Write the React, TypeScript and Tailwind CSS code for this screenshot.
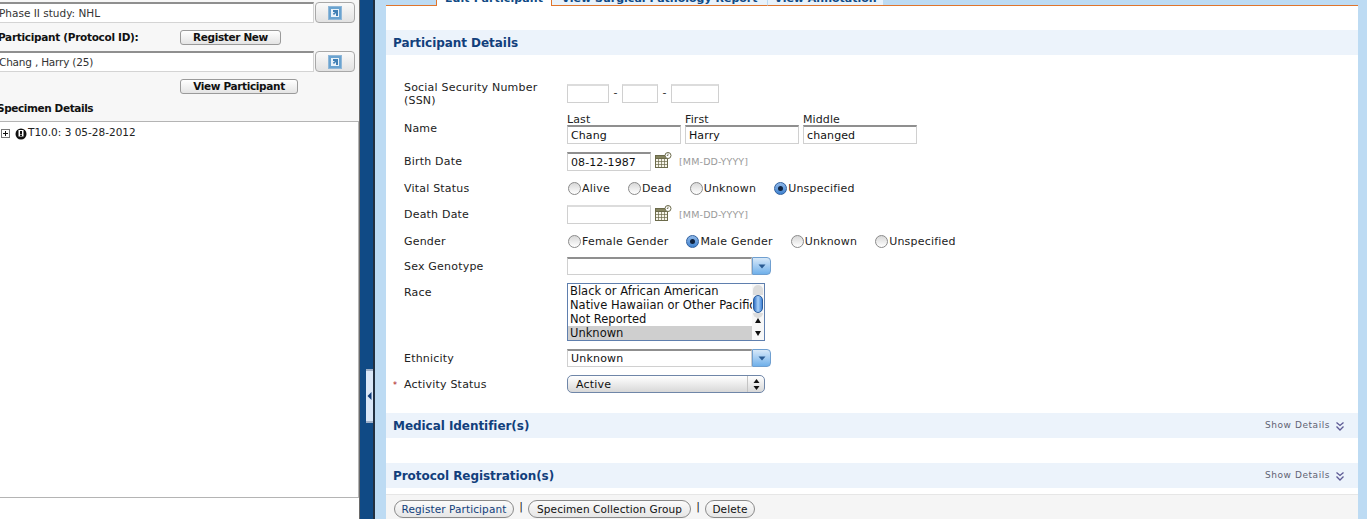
import React from 'react';

const Radio = ({ on }: { on?: boolean }) => (
  <span className={`inline-flex items-center justify-center w-[13px] h-[13px] rounded-full border shrink-0 ${on ? 'border-[#2f5f9e] bg-gradient-to-b from-[#8fb8e8] to-[#3f83d0]' : 'border-[#8a8a8a] bg-gradient-to-b from-[#d8d8d8] to-[#ffffff]'}`}>
    {on && <span className="w-[5px] h-[5px] rounded-full bg-[#10233f]" />}
  </span>
);

const RadioItem = ({ label, on }: { label: string; on?: boolean }) => (
  <span className="flex items-center gap-px">
    <Radio on={on} />
    <span className="pt-px">{label}</span>
  </span>
);

const Calendar = () => (
  <svg width="17" height="17" viewBox="0 0 17 17" className="shrink-0 mb-[3px]">
    <rect x="0.5" y="3.5" width="12" height="12" fill="#f7f5ea" stroke="#6b6a4a" />
    <rect x="0.5" y="3.5" width="12" height="3" fill="#85845f" stroke="#6b6a4a" />
    <path d="M3.5 7v8M6.5 7v8M9.5 7v8M1 9.5h11M1 12.5h11" stroke="#6b6a4a" strokeWidth="0.7" />
    <circle cx="13" cy="3.5" r="3" fill="#fff" stroke="#6b6a4a" />
    <path d="M13 1.5v2h-1.2" fill="none" stroke="#6b6a4a" strokeWidth="0.8" />
  </svg>
);

const DateHint = () => (
  <span className="ml-[7px] pt-px text-[9.5px] text-[#9a9a9a] tracking-[0.15px]">[MM-DD-YYYY]</span>
);

const TextBox = ({ w, value, light }: { w: string; value?: string; light?: boolean }) => (
  <div className={`${w} h-[19px] bg-white border border-[#d0d0d0] border-t-2 ${light ? 'border-t-[#dcdcdc]' : 'border-t-[#8f8f8f]'} px-[3px] leading-[17px] text-[11px] text-[#111] tracking-[0.1px]`}>
    {value}
  </div>
);

const ComboBox = ({ value }: { value?: string }) => (
  <div className="w-[204px] h-[18px] flex">
    <div className="flex-1 bg-white border border-[#d0d0d0] border-t-2 border-t-[#8f8f8f] px-[3px] leading-[15px] tracking-[0.2px]">{value}</div>
    <div className="w-[19px] flex items-center justify-center rounded-r-[4px] border border-[#6f9fd0] bg-gradient-to-b from-[#d7e8f8] to-[#6fb0ea]">
      <svg width="8" height="5" viewBox="0 0 8 5"><path d="M0.5 0.5h7L4 4.5z" fill="#2a5a92" /></svg>
    </div>
  </div>
);

const SectionBar = ({ title, details }: { title: string; details?: boolean }) => (
  <div className="h-[25px] bg-[#ecf3fb] flex items-center justify-between pl-[7px] pr-[14px]">
    <span className="pt-px font-bold text-[12px] tracking-[-0.05px] text-[#123f7c]">{title}</span>
    {details && (
      <span className="flex items-center gap-[6px] pt-px text-[9px] tracking-[0.55px] text-[#5f6272]">
        Show Details
        <svg width="8" height="9" viewBox="0 0 8 9" fill="none" stroke="#5d5a94" strokeWidth="1.3">
          <path d="M0.5 0.5L4 3.5L7.5 0.5M0.5 4.5L4 8L7.5 4.5" />
        </svg>
      </span>
    )}
  </div>
);

const LookupBtn = () => (
  <div className="w-[40px] h-[21px] rounded-[4px] border border-[#a8a8a8] bg-gradient-to-b from-[#fafafa] to-[#e2e2e2] flex items-center justify-center">
    <svg width="14" height="14" viewBox="0 0 14 14">
      <rect x="0.5" y="0.5" width="13" height="13" fill="#6aa3d0" stroke="#8fb7d8" />
      <rect x="3" y="3" width="8" height="8" fill="#eaf3fa" />
      <path d="M5 4h5v6H8V7L6 9 4.8 7.8 7 6H5z" fill="#3f7fb5" />
    </svg>
  </div>
);

const SmallBtn = ({ label, w }: { label: string; w: string }) => (
  <div className={`${w} h-[15px] pt-px rounded-[3px] border border-[#9a9a9a] bg-gradient-to-b from-[#ffffff] to-[#e4e4e4] flex items-center justify-center font-bold text-[10.5px] text-[#111] tracking-[-0.35px]`}>
    {label}
  </div>
);

const PillBtn = ({ label, w, blue }: { label: string; w: string; blue?: boolean }) => (
  <div className={`${w} h-[18px] pt-px rounded-full border border-[#8a8a8a] bg-gradient-to-b from-[#fbfbfb] to-[#e6e6e6] flex items-center justify-center text-[10.5px] tracking-[0.1px] ${blue ? 'text-[#123f7c]' : 'text-[#111]'}`}>
    {label}
  </div>
);

const Row = ({ label, h, mt, req, top, children }: { label: React.ReactNode; h: string; mt: string; req?: boolean; top?: boolean; children: React.ReactNode }) => (
  <div className={`flex ${h} ${mt} ${top ? 'items-start' : 'items-center'}`}>
    <div className={`w-[163px] shrink-0 flex leading-[13px] tracking-[0.2px] text-[#222] ${top ? 'pt-[3px]' : ''} ${req ? 'pt-px' : ''}`}>
      {req && <span className="w-[11px] -ml-[11px] pt-px text-[#a11] text-[8px]">*</span>}
      <div className="w-[140px]">{label}</div>
    </div>
    {children}
  </div>
);

const Tab = ({ label, w, sep }: { label: string; w: string; sep?: boolean }) => (
  <div className={`${w} h-[20px] shrink-0 flex items-end justify-center whitespace-nowrap leading-[13px] bg-[#e8f2fb] border-b border-[#e0752c] ${sep ? 'border-r border-r-[#bddbf3]' : ''}`}>
    {label}
  </div>
);

export default function App() {
  return (
    <div className="w-[1367px] h-[519px] overflow-hidden flex bg-white text-[11px] text-[#111]" style={{ fontFamily: '"DejaVu Sans", Verdana, sans-serif' }}>
      {/* left tree panel */}
      <div className="w-[359px] shrink-0 flex flex-col bg-[#f7f7f7]">
        <div className="flex gap-px pt-[2px]">
          <div className="w-[316px] h-[21px] bg-white border border-[#d4d4d4] border-t-2 border-t-[#8f8f8f] -ml-[2px] leading-[19px] text-[10.5px] text-[#333]">Phase II study: NHL</div>
          <LookupBtn />
        </div>
        <div className="flex items-center h-[15px] mt-[7px]">
          <span className="w-[182px] -ml-[2px] pt-px font-bold text-[10.5px] tracking-[-0.3px]">Participant (Protocol ID):</span>
          <SmallBtn label="Register New" w="w-[101px]" />
        </div>
        <div className="flex gap-px mt-[6px]">
          <div className="w-[316px] h-[21px] bg-white border border-[#d4d4d4] border-t-2 border-t-[#8f8f8f] -ml-[2px] leading-[18px] text-[10.5px] tracking-[-0.2px] text-[#333]">Chang , Harry (25)</div>
          <LookupBtn />
        </div>
        <div className="pl-[180px] mt-[7px]">
          <SmallBtn label="View Participant" w="w-[118px]" />
        </div>
        <div className="font-bold mt-[7px] leading-[13px] text-[10.5px] tracking-[-0.4px] -ml-[3px] pt-[1px]">Specimen Details</div>
        <div className="mt-[6px] h-[377px] w-[359px] bg-white border-t border-b border-r border-[#b4b4b4] pt-[4px] flex items-start text-[#222]">
          <svg width="9" height="9" viewBox="0 0 9 9" className="ml-px mt-[3px] shrink-0">
            <rect x="0.5" y="0.5" width="8" height="8" fill="#fff" stroke="#777" />
            <path d="M2 4.5h5M4.5 2v5" stroke="#111" />
          </svg>
          <svg width="12" height="12" viewBox="0 0 12 12" className="ml-[5px] mt-[2px] shrink-0">
            <circle cx="6" cy="6" r="5.5" fill="#111" />
            <rect x="3.5" y="2" width="5" height="6.5" fill="#fff" />
            <rect x="5" y="3" width="2" height="3.5" fill="#111" />
            <rect x="5" y="7" width="2" height="1" fill="#111" />
          </svg>
          <span className="ml-[1px] leading-[13px] text-[10.5px]">T10.0: 3 05-28-2012</span>
        </div>
        <div className="flex-1 bg-white" />
      </div>

      {/* splitter */}
      <div className="relative w-[16px] shrink-0 flex border-l border-[#6a6a6a]">
        <div className="w-[13px] bg-[#104a85]" />
        <div className="w-[2px] bg-[#223040]" />
        <div className="absolute left-[6px] top-[369px] w-[7px] h-[54px] bg-[#dbe8f8] border-y-2 border-[#9fb0c8] flex items-center justify-center">
          <svg width="5" height="8" viewBox="0 0 5 8"><path d="M4.5 0L0.5 4L4.5 8z" fill="#123f7c" /></svg>
        </div>
      </div>

      {/* main panel */}
      <div className="w-[992px] bg-[#bddbf3] pl-[11px] pr-[9px] flex flex-col">
        <div className="w-[972px] flex-1 flex flex-col bg-white">
          <div className="h-[6px] flex items-end overflow-hidden bg-[#bddbf3] font-bold text-[#104a85]">
            <div className="w-[50px] h-[6px] shrink-0 border-b border-[#e0752c]" />
            <div className="w-[116px] h-[21px] shrink-0 flex items-end justify-center whitespace-nowrap leading-[14px] bg-white border-x border-[#e0752c] tracking-[0.1px]">Edit Participant</div>
            <Tab label="View Surgical Pathology Report" w="w-[216px]" sep />
            <Tab label="View Annotation" w="w-[115px]" />
            <div className="flex-1 h-[6px] border-b border-[#e0752c]" />
          </div>
          <div className="mt-[24px]"><SectionBar title="Participant Details" /></div>
          <div className="pl-[18px] pt-[29px]">
            <Row label="Social Security Number (SSN)" h="h-[19px]" mt="mt-0">
              <div className="flex items-center text-[#333]">
                <TextBox w="w-[42px]" light />
                <span className="w-[13px] text-center">-</span>
                <TextBox w="w-[36px]" light />
                <span className="w-[13px] text-center">-</span>
                <TextBox w="w-[48px]" light />
              </div>
            </Row>
            <Row label="Name" h="h-[31px]" mt="mt-[10px]">
              <div className="flex gap-1">
                {[['Last', 'Chang'], ['First', 'Harry'], ['Middle', 'changed']].map(([k, v]) => (
                  <div key={k} className="w-[114px]">
                    <div className="h-[12px] leading-[14px] tracking-[0.1px] text-[#222]">{k}</div>
                    <TextBox w="w-[114px]" value={v} />
                  </div>
                ))}
              </div>
            </Row>
            <Row label="Birth Date" h="h-[19px]" mt="mt-[8px]">
              <TextBox w="w-[84px]" value="08-12-1987" />
              <span className="ml-[4px]"><Calendar /></span>
              <DateHint />
            </Row>
            <Row label="Vital Status" h="h-[19px]" mt="mt-[8px]">
              <div className="flex gap-[18px] pl-px tracking-[0.2px] text-[#222]">
                <RadioItem label="Alive" />
                <RadioItem label="Dead" />
                <RadioItem label="Unknown" />
                <RadioItem label="Unspecified" on />
              </div>
            </Row>
            <Row label="Death Date" h="h-[19px]" mt="mt-[7px]">
              <TextBox w="w-[84px]" light />
              <span className="ml-[4px]"><Calendar /></span>
              <DateHint />
            </Row>
            <Row label="Gender" h="h-[19px]" mt="mt-[8px]">
              <div className="flex gap-[18px] pl-px tracking-[0.2px] text-[#222]">
                <RadioItem label="Female Gender" />
                <RadioItem label="Male Gender" on />
                <RadioItem label="Unknown" />
                <RadioItem label="Unspecified" />
              </div>
            </Row>
            <Row label="Sex Genotype" h="h-[18px]" mt="mt-[6px]">
              <ComboBox />
            </Row>
            <Row label="Race" h="h-[58px]" mt="mt-[8px]" top>
              <div className="w-[198px] h-[58px] flex border border-[#5f7fae] bg-white overflow-hidden leading-[14px] text-[11.5px] text-[#111] whitespace-nowrap">
                <div className="w-[184px] overflow-hidden">
                  <div className="pl-[2px]">Black or African American</div>
                  <div className="pl-[2px]">Native Hawaiian or Other Pacific Islander</div>
                  <div className="pl-[2px]">Not Reported</div>
                  <div className="pl-[2px] h-[15px] bg-[#cfcfcf]">Unknown</div>
                </div>
                <div className="w-[12px] flex flex-col items-center bg-[#f8f8f8] pt-px">
                  <div className="w-[10px] h-[10px] rounded-t-full bg-[#dcdcdc]" />
                  <div className="w-[10px] h-[18px] rounded-full bg-gradient-to-r from-[#2f6fc4] via-[#a8d0f8] to-[#3f82d6] border border-[#2b5c9c]" />
                  <div className="w-[10px] h-[5px] rounded-b-full bg-[#dcdcdc]" />
                  <svg width="6" height="5" viewBox="0 0 6 5"><path d="M3 0L6 5H0z" fill="#111" /></svg>
                  <svg width="6" height="5" viewBox="0 0 6 5" className="mt-[8px]"><path d="M0 0H6L3 5z" fill="#111" /></svg>
                </div>
              </div>
            </Row>
            <Row label="Ethnicity" h="h-[18px]" mt="mt-[8px]">
              <ComboBox value="Unknown" />
            </Row>
            <Row label="Activity Status" h="h-[18px]" mt="mt-[8px]" req>
              <div className="w-[198px] h-[18px] flex rounded-[5px] border border-[#6f86a8] bg-gradient-to-b from-[#ffffff] via-[#ececec] to-[#d8d8d8] pl-[8px] leading-[17px] tracking-[0.2px] text-[#111]">
                <div className="flex-1">Active</div>
                <div className="w-[17px] border-l border-[#c4c4c4] flex items-center justify-center">
                  <svg width="7" height="11" viewBox="0 0 7 11"><path d="M3.5 0L6.5 4H0.5zM0.5 7H6.5L3.5 11z" fill="#111" /></svg>
                </div>
              </div>
            </Row>
          </div>
          <div className="mt-[20px]"><SectionBar title="Medical Identifier(s)" details /></div>
          <div className="mt-[25px]"><SectionBar title="Protocol Registration(s)" details /></div>
          <div className="mt-[6px] flex-1 bg-[#f5f5f5] border-t border-[#e6e6e6] pl-[8px] pt-[5px] flex items-start">
            <PillBtn label="Register Participant" w="w-[120px]" blue />
            <span className="w-[14px] text-center leading-[14px] text-[#222]">|</span>
            <PillBtn label="Specimen Collection Group" w="w-[163px]" />
            <span className="w-[14px] text-center leading-[14px] text-[#222]">|</span>
            <PillBtn label="Delete" w="w-[50px]" />
          </div>
        </div>
      </div>
    </div>
  );
}
